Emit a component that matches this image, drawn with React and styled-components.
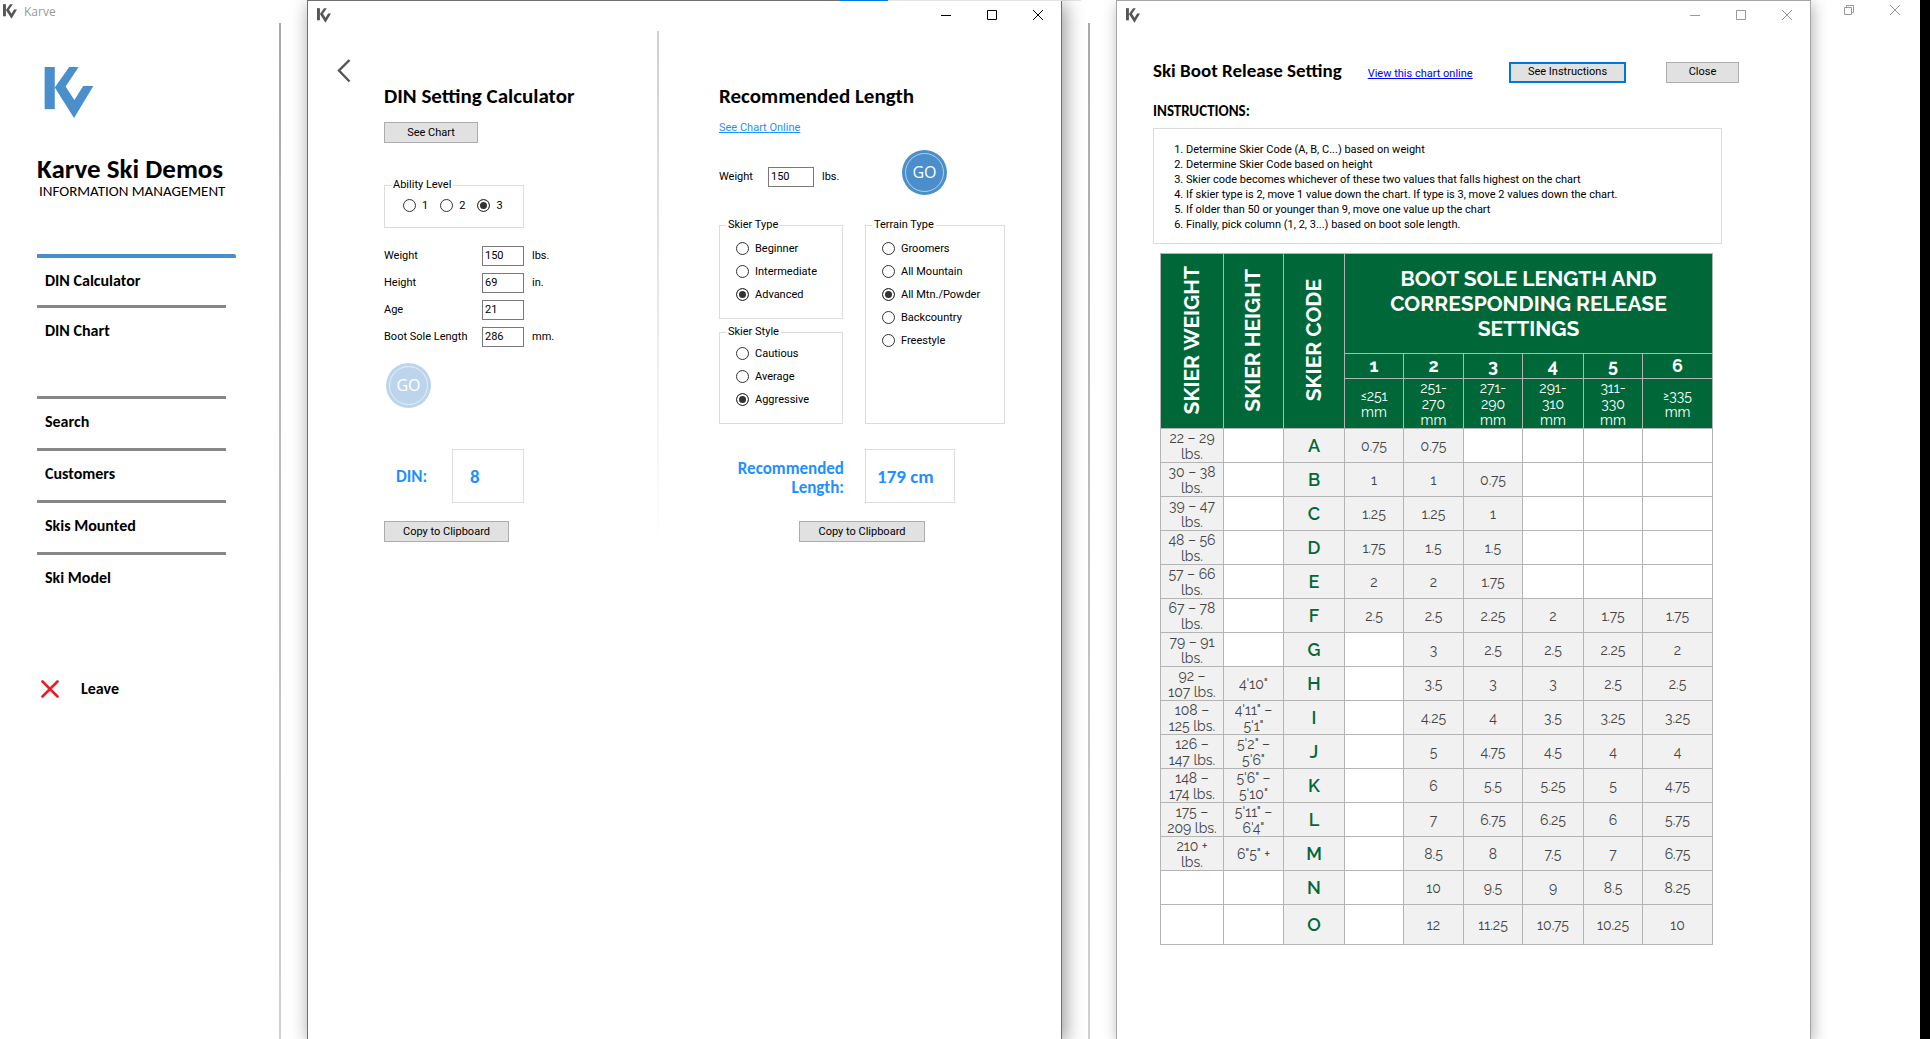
import React from "react";
import styled, { createGlobalStyle, css } from "styled-components";

const ui = 'Roboto, "Liberation Sans", Arial, sans-serif';
const heading = 'Carlito, Lato, sans-serif';

const GlobalStyle = createGlobalStyle`
  *, *::before, *::after { box-sizing: border-box; }
  body { margin: 0; background: #fff; color: #000; font: 11px/14px ${ui}; }
  h1, h2, h3, p, ol { margin: 0; padding: 0; }
  button, input { font: inherit; color: inherit; }
`;

/* ---------- shell ---------- */

const Desktop = styled.div`
  display: grid;
  grid-template-columns: 307px minmax(0, 755fr) 54px minmax(0, 695fr) 109px 10px;
  min-height: 100vh;
  overflow: hidden;
`;

const Sidebar = styled.aside`
  display: flex;
  flex-direction: column;
`;

const Rule = styled.div`
  width: 2px;
  flex: none;
  margin-top: ${(p) => p.$top}px;
  background: linear-gradient(#a9a9a9, #d0d0d0);
`;

const SidebarFrame = styled.div`
  display: grid;
  grid-template-columns: 279px 2px;
`;

const Between = styled.div`
  padding-left: 26px;
  border-top: 1px solid #e5e5e5;
  border-image: linear-gradient(90deg, #e5e5e5 19px, #fff 19px) 1;
  display: flex;
`;

const Edge = styled.div`
  background: #000;
`;

const Window = styled.section`
  position: relative;
  z-index: 1;
  display: flex;
  flex-direction: column;
  background: #fff;
  border: 1px solid ${(p) => (p.$active ? "#707070" : "#a5a5a5")};
  border-bottom: 0;
  box-shadow: ${(p) =>
    p.$active ? "3px 4px 18px rgba(0,0,0,.42)" : "2px 4px 14px rgba(0,0,0,.3)"};
`;

const TaskAccent = styled.span`
  position: absolute;
  top: -1px;
  right: -1px;
  width: 222px;
  height: 1px;
  background: linear-gradient(90deg, #0078d7 48px, #e5e5e5 48px);
`;

const TitleBar = styled.header`
  display: flex;
  align-items: center;
  height: 28px;
  margin-bottom: 2px;
  padding-left: 9px;
`;

const Controls = styled.div`
  display: flex;
  margin-left: auto;
  color: ${(p) => (p.$muted ? "#999" : "#000")};
`;

const Control = styled.button`
  display: grid;
  place-items: center;
  width: 46px;
  height: ${(p) => p.$height || 28}px;
  padding: 0;
  border: 0;
  background: none;
`;

const AppBar = styled.header`
  display: flex;
  align-items: center;
  gap: 7px;
  height: 23px;
  padding-left: 3px;
  font: 12px/22px "Open Sans", sans-serif;
  color: #999;
`;

const MainControls = styled.div`
  display: flex;
  align-items: flex-start;
  padding-left: 15px;
  color: #999;
`;

function Logo({ size, color }) {
  return (
    <svg width={size} height={size + 1} viewBox="132 201 149 156" fill={color} aria-hidden="true">
      <path d="M132 201h31v129h-31z" />
      <path d="M207 201h29l-40 60 27 41 27-43h31l-59 98-59-93z" />
    </svg>
  );
}

const glyphs = {
  Minimize: "M0 5.5h10",
  Maximize: "M.5.5h9v9h-9z",
  Restore: "M.5 2.5h7v7h-7zM2.5 2.5v-2h7v7h-2",
  Close: "M0 0l10 10M10 0l-10 10",
};

function Glyph({ kind }) {
  return (
    <svg width="10" height="10" viewBox="0 0 10 10" fill="none" stroke="currentColor" aria-hidden="true">
      <path d={glyphs[kind]} />
    </svg>
  );
}

function WindowBar({ muted }) {
  return (
    <TitleBar>
      <Logo size={14} color="#555" />
      <Controls $muted={muted}>
        {["Minimize", "Maximize", "Close"].map((k) => (
          <Control key={k} type="button" aria-label={k}>
            <Glyph kind={k} />
          </Control>
        ))}
      </Controls>
    </TitleBar>
  );
}

/* ---------- sidebar ---------- */

const Brand = styled.div`
  padding: 44px 0 0 37px;
  h1 { margin-top: 37px; font: bold 27px/28px ${heading}; white-space: nowrap; }
  p { padding-left: 2px; font: 15px/16px ${heading}; white-space: nowrap; }
  svg { display: block; margin-left: 7px; }
`;

const Nav = styled.nav`
  display: flex;
  flex-direction: column;
  margin: 55px 53px 0 37px;
`;

const NavLink = styled.a`
  display: block;
  height: 52px;
  padding: 13px 0 0 8px;
  border-top: 3px solid #888;
  color: #000;
  font: bold 16px/20px ${heading};
  text-decoration: none;
  ${(p) => p.$active && css`
    height: 51px;
    margin-right: -10px;
    border-top: 4px solid #4a8ecb;
    border-radius: 0 2px 0 0;
  `}
  ${(p) => p.$spaced && css`margin-top: 39px;`}
`;

const Leave = styled.a`
  display: flex;
  align-items: center;
  gap: 22px;
  margin: 75px 0 0 41px;
  color: #000;
  font: bold 16px/20px ${heading};
  text-decoration: none;
`;

/* ---------- shared form parts ---------- */

const PushButton = styled.button`
  width: ${(p) => p.$width}px;
  height: 21px;
  padding: 0;
  border: ${(p) => (p.$focused ? "2px solid #0078d7" : "1px solid #adadad")};
  background: #e1e1e1;
  line-height: 14px;
`;

const Title = styled.h2`
  padding-bottom: 2px;
  font: bold ${(p) => p.$size || 21}px/26px ${heading};
  white-space: nowrap;
`;

const Link = styled.a`
  color: ${(p) => p.$color};
  text-decoration: underline;
  white-space: nowrap;
`;

const TextBox = styled.input`
  width: ${(p) => p.$width}px;
  height: 20px;
  padding: 0 2px 2px;
  border: 1px solid #7a7a7a;
  background: #fff;
`;

const Group = styled.fieldset`
  min-width: 0;
  margin: 0;
  padding: 0 6px;
  border: 1px solid #dcdcdc;
  legend { padding: 0 2px; height: 14px; }
`;

const Options = styled.div`
  display: flex;
  flex-direction: ${(p) => (p.$row ? "row" : "column")};
  gap: ${(p) => (p.$row ? 12 : 6)}px;
  padding: ${(p) => p.$top}px 0 0 ${(p) => (p.$row ? 12 : 10)}px;
`;

const Option = styled.label`
  display: flex;
  align-items: center;
  gap: 6px;
  height: 17px;
  white-space: nowrap;
`;

const Radio = styled.input`
  appearance: none;
  flex: none;
  width: 13px;
  height: 13px;
  margin: 0;
  border: 1px solid #333;
  border-radius: 50%;
  background: #fff;
  &:checked { background: #333; box-shadow: inset 0 0 0 2px #fff; }
`;

const GoButton = styled.button`
  position: relative;
  width: 45px;
  height: 45px;
  padding: 0;
  border: 0;
  border-radius: 50%;
  background: #4a8ecb;
  color: #fff;
  font: 16px/45px "Open Sans", sans-serif;
  &::after {
    content: "";
    position: absolute;
    inset: 3px;
    border: 1px solid #b5d0ea;
    border-radius: 50%;
  }
  &:disabled { margin-left: 2px; opacity: .36; }
`;

const ResultRow = styled.div`
  display: flex;
  align-items: center;
  font: bold 17px/19px ${heading};
  color: #1e90ff;
`;

const ResultBox = styled.output`
  display: flex;
  align-items: center;
  width: ${(p) => p.$width}px;
  height: 54px;
  padding-left: ${(p) => p.$indent}px;
  border: 1px solid #dcdcdc;
  font-size: 19px;
`;

function RadioGroup({ name, legend, options, value, row, top, className }) {
  return (
    <Group className={className}>
      <legend>{legend}</legend>
      <Options $row={row} $top={top}>
        {options.map((o) => (
          <Option key={o}>
            <Radio type="radio" name={name} defaultChecked={o === value} />
            {o}
          </Option>
        ))}
      </Options>
    </Group>
  );
}

/* ---------- calculator ---------- */

const Panes = styled.div`
  display: grid;
  grid-template-columns: 349px 2px minmax(0, 1fr);
`;

const Divider = styled.div`
  height: 520px;
  background: linear-gradient(#d0d0d0, #fff);
`;

const Pane = styled.div`
  display: flex;
  flex-direction: column;
  align-items: flex-start;
  padding: ${(p) => p.$top}px 0 0 ${(p) => p.$left}px;
`;

const BackButton = styled.button`
  width: 14px;
  height: 24px;
  margin-left: -47px;
  padding: 0;
  border: 0;
  background: none;
  svg { display: block; }
`;

const ChartButton = styled(PushButton)`
  margin-top: 11px;
`;

const AbilityGroup = styled(RadioGroup)`
  width: 140px;
  height: 50px;
  margin-top: 35px;
`;

const Fields = styled.div`
  display: grid;
  grid-template-columns: 98px 42px auto;
  align-items: center;
  row-gap: 7px;
  margin: 18px 0 16px;
  span { padding-left: 8px; }
`;

const DinResult = styled(ResultRow)`
  margin: 41px 0 18px;
  label { width: 68px; padding-left: 12px; }
`;

const WeightRow = styled.div`
  display: flex;
  align-items: center;
  margin-top: 15px;
`;

const WeightField = styled.div`
  display: flex;
  align-items: center;
  width: 183px;
  padding-top: 9px;
  label { width: 49px; }
  span { padding-left: 8px; }
`;

const GroupGrid = styled.div`
  display: grid;
  grid-template-columns: 124px 140px;
  grid-template-rows: 101px 99px;
  gap: 6px 22px;
  margin-top: 23px;
`;

const TallGroup = styled(RadioGroup)`
  grid-column: 2;
  grid-row: 1 / 3;
`;

const LengthResult = styled(ResultRow)`
  gap: 21px;
  margin: 25px 0 18px;
  label { width: 125px; padding-top: 3px; text-align: right; }
`;

const OnlineLink = styled(Link)`
  margin-top: 10px;
`;

const CopyLength = styled(PushButton)`
  margin-left: 80px;
`;

const fields = [
  ["Weight", "150", "lbs."],
  ["Height", "69", "in."],
  ["Age", "21", ""],
  ["Boot Sole Length", "286", "mm."],
];

function Calculator() {
  return (
    <Window $active aria-label="Calculator">
      <TaskAccent />
      <WindowBar />
      <Panes>
        <Pane $top={28} $left={76}>
          <BackButton type="button" aria-label="Back">
            <svg width="14" height="24" viewBox="0 0 14 24" fill="none" stroke="#555" strokeWidth="2.4">
              <path d="M12.5 1L2 11.500 12.500 22.500" />
            </svg>
          </BackButton>
          <Title>DIN Setting Calculator</Title>
          <ChartButton type="button" $width={94}>See Chart</ChartButton>
          <AbilityGroup name="ability" legend="Ability Level" options={["1", "2", "3"]} value="3" row top={5} />
          <Fields>
            {fields.map(([label, value, unit]) => (
              <React.Fragment key={label}>
                <label htmlFor={`din-${label}`}>{label}</label>
                <TextBox id={`din-${label}`} $width={42} defaultValue={value} />
                <span>{unit}</span>
              </React.Fragment>
            ))}
          </Fields>
          <GoButton type="button" disabled>GO</GoButton>
          <DinResult>
            <label htmlFor="din">DIN:</label>
            <ResultBox id="din" $width={72} $indent={17}>8</ResultBox>
          </DinResult>
          <PushButton type="button" $width={125}>Copy to Clipboard</PushButton>
        </Pane>
        <Divider />
        <Pane $top={52} $left={60}>
          <Title>Recommended Length</Title>
          <OnlineLink href="#chart" $color="#1e90ff">See Chart Online</OnlineLink>
          <WeightRow>
            <WeightField>
              <label htmlFor="len-weight">Weight</label>
              <TextBox id="len-weight" $width={46} defaultValue="150" />
              <span>lbs.</span>
            </WeightField>
            <GoButton type="button">GO</GoButton>
          </WeightRow>
          <GroupGrid>
            <RadioGroup name="type" legend="Skier Type" options={["Beginner", "Intermediate", "Advanced"]} value="Advanced" top={8} />
            <RadioGroup name="style" legend="Skier Style" options={["Cautious", "Average", "Aggressive"]} value="Aggressive" top={6} />
            <TallGroup
              name="terrain"
              legend="Terrain Type"
              options={["Groomers", "All Mountain", "All Mtn./Powder", "Backcountry", "Freestyle"]}
              value="All Mtn./Powder"
              top={8}
            />
          </GroupGrid>
          <LengthResult>
            <label htmlFor="length">Recommended Length:</label>
            <ResultBox id="length" $width={90} $indent={11}>179 cm</ResultBox>
          </LengthResult>
          <CopyLength type="button" $width={126}>Copy to Clipboard</CopyLength>
        </Pane>
      </Panes>
    </Window>
  );
}

/* ---------- chart ---------- */

const ChartHead = styled.div`
  display: flex;
  align-items: center;
  gap: 26px;
  padding: 27px 71px 0 36px;
`;

const ChartLink = styled(Link)`
  padding-top: 4px;
`;

const ChartActions = styled.div`
  display: flex;
  gap: 40px;
  margin-left: auto;
`;

const Subtitle = styled.h3`
  margin: 15px 0 7px 36px;
  font: bold 15px/20px ${heading};
`;

const Instructions = styled.ol`
  margin: 0 88px 0 36px;
  padding: 13px 0 11px 32px;
  border: 1px solid #dcdcdc;
  line-height: 15px;
`;

const TableWrap = styled.div`
  padding: 9px 97px 40px 43px;
`;

const Table = styled.table`
  width: 100%;
  table-layout: fixed;
  border-collapse: collapse;
  font: 14px/17px Raleway, Lato, sans-serif;
  font-variant-numeric: oldstyle-nums;
  color: #444;
  th, td { padding: 0; border: 1px solid #b4b4b4; text-align: center; }
  thead th { background: #006838; color: #fff; }
`;

const Upright = styled.th`
  font-size: 21px;
  span {
    display: inline-block;
    writing-mode: vertical-rl;
    transform: rotate(180deg);
    line-height: 24px;
    white-space: nowrap;
  }
`;

const Banner = styled.th`
  height: 100px;
  font-size: 21px;
  line-height: 25px;
`;

const ColumnNumber = styled.th`
  height: 25px;
  font-size: 18px;
  line-height: 20px;
`;

const Sole = styled.th`
  height: 50px;
  font-weight: normal;
  line-height: 16px;
  white-space: pre-line;
`;

const Cell = styled.td`
  height: ${(p) => (p.$last ? 40 : 34)}px;
  background: ${(p) => (p.$empty ? "#fff" : "#f1f1f1")};
  line-height: 16px;
  white-space: pre-line;
`;

const Code = styled.th`
  background: #f1f1f1;
  color: #006838;
  font-size: 18px;
  font-weight: 600;
`;

const columns = [63, 60, 61, 59, 60, 59, 61, 59, 70];
const soles = ["≤251\nmm", "251-\n270\nmm", "271-\n290\nmm", "291-\n310\nmm", "311-\n330\nmm", "≥335\nmm"];
const rows = [
  ["22 – 29\nlbs.", "", "A", "0.75", "0.75", "", "", "", ""],
  ["30 – 38\nlbs.", "", "B", "1", "1", "0.75", "", "", ""],
  ["39 – 47\nlbs.", "", "C", "1.25", "1.25", "1", "", "", ""],
  ["48 – 56\nlbs.", "", "D", "1.75", "1.5", "1.5", "", "", ""],
  ["57 – 66\nlbs.", "", "E", "2", "2", "1.75", "", "", ""],
  ["67 – 78\nlbs.", "", "F", "2.5", "2.5", "2.25", "2", "1.75", "1.75"],
  ["79 – 91\nlbs.", "", "G", "", "3", "2.5", "2.5", "2.25", "2"],
  ["92 –\n107 lbs.", "4'10\"", "H", "", "3.5", "3", "3", "2.5", "2.5"],
  ["108 –\n125 lbs.", "4'11\" –\n5'1\"", "I", "", "4.25", "4", "3.5", "3.25", "3.25"],
  ["126 –\n147 lbs.", "5'2\" –\n5'6\"", "J", "", "5", "4.75", "4.5", "4", "4"],
  ["148 –\n174 lbs.", "5'6\" –\n5'10\"", "K", "", "6", "5.5", "5.25", "5", "4.75"],
  ["175 –\n209 lbs.", "5'11\" –\n6'4\"", "L", "", "7", "6.75", "6.25", "6", "5.75"],
  ["210 +\nlbs.", "6\"5\" +", "M", "", "8.5", "8", "7.5", "7", "6.75"],
  ["", "", "N", "", "10", "9.5", "9", "8.5", "8.25"],
  ["", "", "O", "", "12", "11.25", "10.75", "10.25", "10"],
];

function Chart() {
  return (
    <Window aria-label="Chart">
      <WindowBar muted />
      <ChartHead>
        <Title $size={19}>Ski Boot Release Setting</Title>
        <ChartLink href="#online" $color="#00f">View this chart online</ChartLink>
        <ChartActions>
          <PushButton type="button" $width={117} $focused>See Instructions</PushButton>
          <PushButton type="button" $width={73}>Close</PushButton>
        </ChartActions>
      </ChartHead>
      <Subtitle>INSTRUCTIONS:</Subtitle>
      <Instructions>
        <li>Determine Skier Code (A, B, C...) based on weight</li>
        <li>Determine Skier Code based on height</li>
        <li>Skier code becomes whichever of these two values that falls highest on the chart</li>
        <li>If skier type is 2, move 1 value down the chart. If type is 3, move 2 values down the chart.</li>
        <li>If older than 50 or younger than 9, move one value up the chart</li>
        <li>Finally, pick column (1, 2, 3...) based on boot sole length.</li>
      </Instructions>
      <TableWrap>
        <Table>
          <colgroup>
            {columns.map((w, i) => (
              <col key={i} style={{ width: `${(w / 552) * 100}%` }} />
            ))}
          </colgroup>
          <thead>
            <tr>
              {["SKIER WEIGHT", "SKIER HEIGHT", "SKIER CODE"].map((t) => (
                <Upright key={t} rowSpan={3} scope="col"><span>{t}</span></Upright>
              ))}
              <Banner colSpan={6}>
                BOOT SOLE LENGTH AND<br />CORRESPONDING RELEASE<br />SETTINGS
              </Banner>
            </tr>
            <tr>{[1, 2, 3, 4, 5, 6].map((n) => <ColumnNumber key={n}>{n}</ColumnNumber>)}</tr>
            <tr>{soles.map((s) => <Sole key={s} scope="col">{s}</Sole>)}</tr>
          </thead>
          <tbody>
            {rows.map((r, ri) => (
              <tr key={r[2]}>
                {r.map((v, i) =>
                  i === 2 ? (
                    <Code key={i} scope="row">{v}</Code>
                  ) : (
                    <Cell key={i} $empty={!v} $last={ri === rows.length - 1}>{v}</Cell>
                  )
                )}
              </tr>
            ))}
          </tbody>
        </Table>
      </TableWrap>
    </Window>
  );
}

const links = [
  { text: "DIN Calculator", active: true },
  { text: "DIN Chart" },
  { text: "Search", spaced: true },
  { text: "Customers" },
  { text: "Skis Mounted" },
  { text: "Ski Model" },
];

export default function App() {
  return (
    <>
      <GlobalStyle />
      <Desktop>
        <SidebarFrame>
          <Sidebar>
            <AppBar>
              <Logo size={14} color="#555" />
              Karve
            </AppBar>
            <Brand>
              <Logo size={50} color="#4a8ecb" />
              <h1>Karve Ski Demos</h1>
              <p>INFORMATION MANAGEMENT</p>
            </Brand>
            <Nav>
              {links.map((l) => (
                <NavLink key={l.text} href="#nav" $active={l.active} $spaced={l.spaced}>{l.text}</NavLink>
              ))}
            </Nav>
            <Leave href="#leave">
              <svg width="18" height="18" viewBox="0 0 18 18" stroke="#ed1c24" strokeWidth="2.6" strokeLinecap="round" aria-hidden="true">
                <path d="M1.500 1.500l15 15M16.500 1.500l-15 15" />
              </svg>
              Leave
            </Leave>
          </Sidebar>
          <Rule $top={23} />
        </SidebarFrame>
        <Calculator />
        <Between>
          <Rule $top={22} />
        </Between>
        <Chart />
        <MainControls>
          <Control type="button" aria-label="Restore" $height={20}><Glyph kind="Restore" /></Control>
          <Control type="button" aria-label="Close" $height={20}><Glyph kind="Close" /></Control>
        </MainControls>
        <Edge />
      </Desktop>
    </>
  );
}
